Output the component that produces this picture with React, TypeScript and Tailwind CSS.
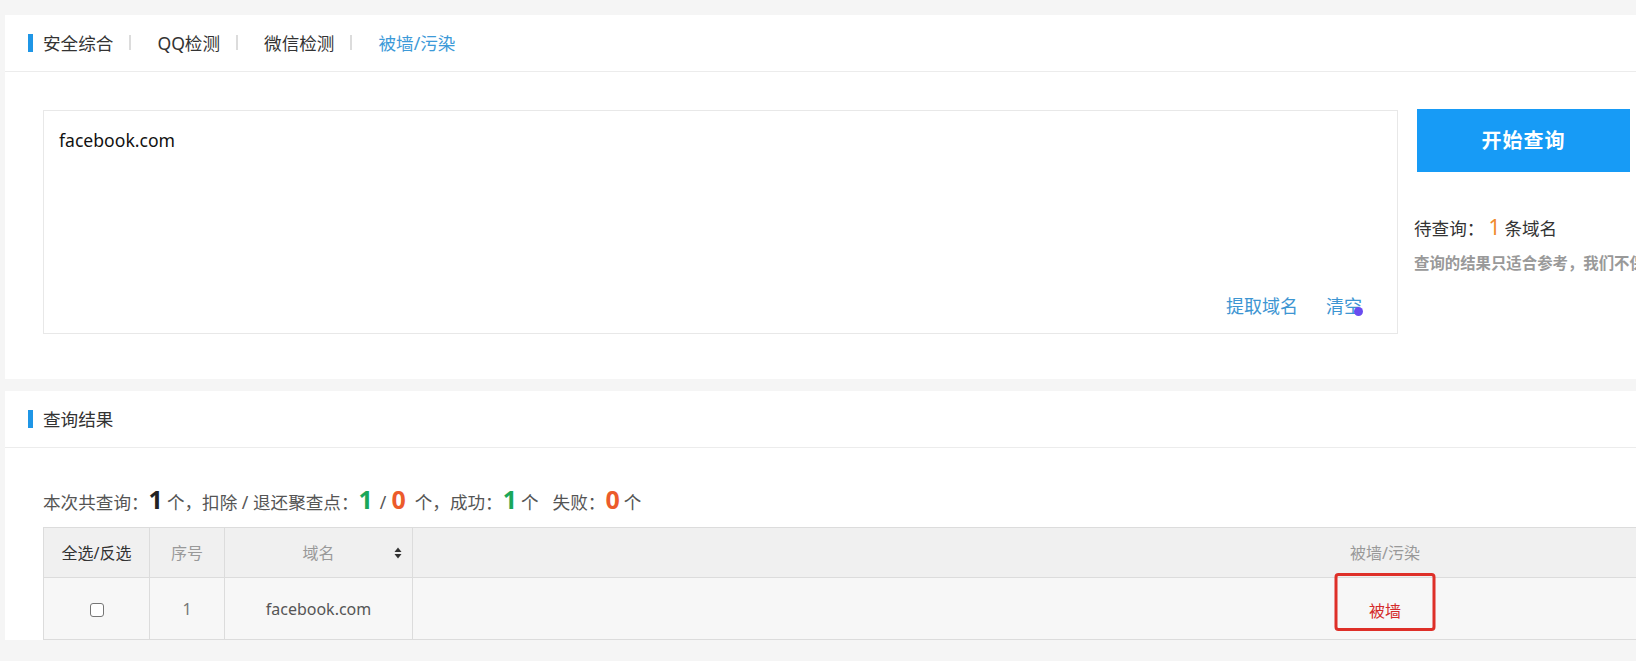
import React from "react";

const tabs = [
  { label: "安全综合", active: false },
  { label: "QQ检测", active: false },
  { label: "微信检测", active: false },
  { label: "被墙/污染", active: true },
];

function SectionTitle({ children }: { children: React.ReactNode }) {
  return (
    <div className="flex items-center h-[57px] border-b border-[#ececec] pl-[23px]">
      <span className="w-[5px] h-[18px] bg-[#1f96e6]" />
      <span className="ml-[10px] text-[17.6px] text-[#333]">{children}</span>
    </div>
  );
}

function SortIcon() {
  return (
    <svg width="8" height="12" viewBox="0 0 8 12" className="text-[#333]">
      <path d="M4 0.5 L7.5 5 L0.5 5 Z" fill="currentColor" />
      <path d="M4 11.5 L7.5 7 L0.5 7 Z" fill="currentColor" />
    </svg>
  );
}

export default function App() {
  return (
    <div
      className="w-[1636px] h-[661px] overflow-hidden bg-[#f5f5f5] pt-[15px] pl-[5px]"
      style={{ fontFamily: '"Noto Sans", "Noto Sans CJK SC", sans-serif' }}>
      <div className="w-[2391px]">
        {/* Query panel */}
        <div className="bg-white">
          <div className="flex items-center h-[57px] border-b border-[#ececec] pl-[23px]">
            <span className="w-[5px] h-[18px] bg-[#1f96e6]" />
            <div className="ml-[10px] flex items-center text-[17.6px]">
              {tabs.map((t, i) => (
                <React.Fragment key={t.label}>
                  <span className={t.active ? "text-[#3d9ad8]" : "text-[#333]"}>
                    {t.label}
                  </span>
                  {i < tabs.length - 1 && (
                    <span className="ml-[16px] mr-[26px] w-[2px] h-[15px] bg-[#dcdcdc]" />
                  )}
                </React.Fragment>
              ))}
            </div>
          </div>

          <div className="flex items-start pl-[38px] pt-[38px] pb-[45px]">
            <div className="w-[1355px] h-[224px] border border-[#e8e8e8] flex flex-col px-[15px] pt-[14px] pb-[14px]">
              <p className="text-[17.6px] leading-[30px] text-[#111]">facebook.com</p>
              <div className="mt-auto flex justify-end items-center pr-[20px] text-[18px] leading-[26px] text-[#3d95d2]">
                <span>提取域名</span>
                <span className="relative ml-[28px]">
                  清空
                  <span className="absolute left-[28px] top-[14px] w-[9px] h-[9px] rounded-full bg-[#6a4cf0]" />
                </span>
              </div>
            </div>

            <div className="ml-[16px] w-[320px] -mt-[1px]">
              <button className="ml-[3px] w-[213px] h-[63px] bg-[#179bf6] text-white text-[20px] font-bold tracking-[1px]">
                开始查询
              </button>
              <div className="mt-[42px] flex items-baseline text-[17.6px] leading-[26px] text-[#333] whitespace-nowrap">
                <span>待查询：</span>
                <span className="text-[21px] text-[#f08a2c] mx-[4px]">1</span>
                <span>条域名</span>
              </div>
              <p className="mt-[12px] text-[15.4px] leading-[22px] font-bold text-[#999] whitespace-nowrap">
                查询的结果只适合参考，我们不保
              </p>
            </div>
          </div>
        </div>

        {/* Results panel */}
        <div className="mt-[12px] bg-white">
          <SectionTitle>查询结果</SectionTitle>

          <div className="pl-[38px] pr-[38px]">
            <div className="mt-[35px] flex items-baseline h-[32px] leading-[32px] text-[17.6px] text-[#555] whitespace-nowrap">
              <span>本次共查询：</span>
              <b className="text-[25px] text-[#222] mr-[4px]">1</b>
              <span>个，扣除 / 退还聚查点：</span>
              <b className="text-[25px] text-[#1aa75a] mr-[7px]">1</b>
              <span>/</span>
              <b className="text-[25px] text-[#ec5b2b] ml-[5px] mr-[9px]">0</b>
              <span>个，成功：</span>
              <b className="text-[25px] text-[#1aa75a] mr-[4px]">1</b>
              <span>个</span>
              <span className="ml-[14px]">失败：</span>
              <b className="text-[25px] text-[#ec5b2b] mr-[4px]">0</b>
              <span>个</span>
            </div>

            <table className="mt-[12px] w-full border-collapse table-fixed text-[16px]">
              <colgroup>
                <col className="w-[106px]" />
                <col className="w-[75px]" />
                <col className="w-[188px]" />
                <col />
              </colgroup>
              <thead>
                <tr className="h-[50px] bg-[#f0f0f0]">
                  <th className="border border-[#dcdcdc] font-normal text-[#333]">全选/反选</th>
                  <th className="border border-[#dcdcdc] font-normal text-[#999]">序号</th>
                  <th className="border border-[#dcdcdc] font-normal text-[#999]">
                    <div className="relative flex justify-center items-center">
                      <span>域名</span>
                      <span className="absolute right-[10px] top-[6px]">
                        <SortIcon />
                      </span>
                    </div>
                  </th>
                  <th className="border border-[#dcdcdc] font-normal text-[#999]">被墙/污染</th>
                </tr>
              </thead>
              <tbody>
                <tr className="h-[62px] bg-[#f7f7f7]">
                  <td className="border border-[#dcdcdc] text-center">
                    <span className="inline-block align-middle w-[14px] h-[14px] border border-[#767676] rounded-[3px] bg-white" />
                  </td>
                  <td className="border border-[#dcdcdc] text-center text-[#777]">1</td>
                  <td className="border border-[#dcdcdc] text-center text-[#555]">facebook.com</td>
                  <td className="border border-[#dcdcdc] text-center">
                    <div className="relative flex justify-center">
                      <span className="pt-[4px] text-[#d42a2a]">被墙</span>
                      <span className="absolute left-1/2 -translate-x-1/2 -top-[22px] w-[101px] h-[58px] border-[3px] border-[#de2f28] rounded-[4px]" />
                    </div>
                  </td>
                </tr>
              </tbody>
            </table>
          </div>
        </div>
      </div>
    </div>
  );
}
